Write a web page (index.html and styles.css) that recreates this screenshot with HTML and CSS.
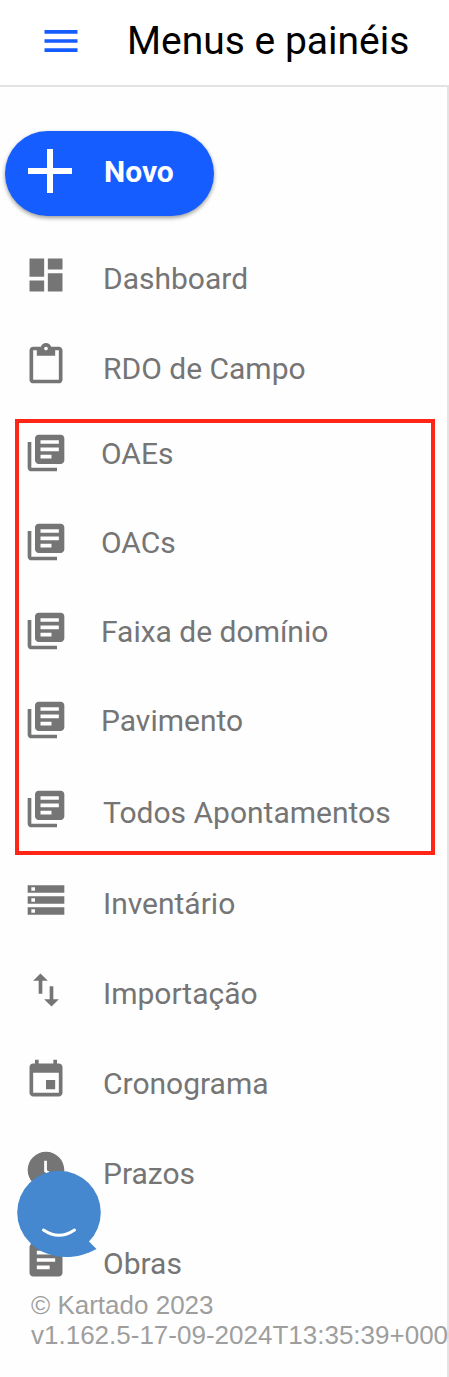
FILE: index.html
```html
<!DOCTYPE html>
<html lang="pt-BR">
<head>
    <meta charset="UTF-8">
    <meta name="viewport" content="width=device-width, initial-scale=1.0">
    <title>Menus e painéis</title>
    <link rel="stylesheet" href="styles.css">
</head>
<body>
    <svg class="sprite" aria-hidden="true">
        <symbol id="books" viewBox="0 0 24 24">
            <path d="M4 6H2v14c0 1.1.9 2 2 2h14v-2H4V6zm16-4H8c-1.1 0-2 .9-2 2v12c0 1.1.9 2 2 2h12c1.1 0 2-.9 2-2V4c0-1.1-.9-2-2-2zm-1 9H9V9h10v2zm-4 4H9v-2h6v2zm4-8H9V5h10v2z"/>
        </symbol>
    </svg>

    <header class="topbar">
        <button class="menu-btn" type="button" aria-label="Menu">
            <svg class="icon" viewBox="0 0 24 24"><path d="M3 18h18v-2H3v2zm0-5h18v-2H3v2zm0-7v2h18V6H3z"/></svg>
        </button>
        <h1>Menus e painéis</h1>
    </header>

    <div class="sidebar">
        <button class="new-btn" type="button">
            <svg class="icon" viewBox="0 0 44 44"><path d="M19 0h6v19h19v6H25v19h-6V25H0v-6h19z"/></svg>
            Novo
        </button>

        <nav>
            <div class="list">
                <a class="item" href="#">
                    <svg class="icon" viewBox="0 0 24 24"><path d="M3 13h8V3H3v10zm0 8h8v-6H3v6zm10 0h8V11h-8v10zm0-18v6h8V3h-8z"/></svg>
                    <span>Dashboard</span>
                </a>
                <a class="item" href="#">
                    <svg class="icon" viewBox="0 0 24 24"><path d="M19 2h-4.18C14.4.84 13.3 0 12 0c-1.3 0-2.4.84-2.82 2H5c-1.1 0-2 .9-2 2v16c0 1.1.9 2 2 2h14c1.1 0 2-.9 2-2V4c0-1.1-.9-2-2-2zm-7 0c.55 0 1 .45 1 1s-.45 1-1 1-1-.45-1-1 .45-1 1-1zm7 18H5V4h2v3h10V4h2v16z"/></svg>
                    <span>RDO de Campo</span>
                </a>
            </div>

            <!-- inventory groups -->
            <div class="list highlight">
                <a class="item sub" href="#"><svg class="icon"><use href="#books"/></svg><span>OAEs</span></a>
                <a class="item sub" href="#"><svg class="icon"><use href="#books"/></svg><span>OACs</span></a>
                <a class="item sub" href="#"><svg class="icon"><use href="#books"/></svg><span>Faixa de domínio</span></a>
                <a class="item sub" href="#"><svg class="icon"><use href="#books"/></svg><span>Pavimento</span></a>
                <a class="item" href="#"><svg class="icon"><use href="#books"/></svg><span>Todos Apontamentos</span></a>
            </div>

            <div class="list">
                <a class="item" href="#">
                    <svg class="icon" viewBox="0 0 24 24"><path d="M2 20h20v-4H2v4zm2-3h2v2H4v-2zM2 4v4h20V4H2zm4 3H4V5h2v2zm-4 7h20v-4H2v4zm2-3h2v2H4v-2z"/></svg>
                    <span>Inventário</span>
                </a>
                <a class="item" href="#">
                    <svg class="icon" viewBox="0 0 24 24"><path d="M16 17.01V10h-2v7.01h-3L15 21l4-3.99h-3zM9 3L5 6.99h3V14h2V6.99h3L9 3z"/></svg>
                    <span>Importação</span>
                </a>
                <a class="item" href="#">
                    <svg class="icon" viewBox="0 0 24 24"><path d="M17 12h-5v5h5v-5zM16 1v2H8V1H6v2H5c-1.11 0-1.99.9-1.99 2L3 19c0 1.1.89 2 2 2h14c1.1 0 2-.9 2-2V5c0-1.1-.9-2-2-2h-1V1h-2zm3 18H5V8h14v11z"/></svg>
                    <span>Cronograma</span>
                </a>
                <a class="item" href="#">
                    <svg class="icon" viewBox="0 0 24 24"><path d="M12 2C6.5 2 2 6.5 2 12s4.5 10 10 10 10-4.5 10-10S17.5 2 12 2zm4.2 14.2L11 13V7h1.5v5.2l4.5 2.7-.8 1.3z"/></svg>
                    <span>Prazos</span>
                </a>
                <a class="item" href="#">
                    <svg class="icon" viewBox="0 0 24 24"><path d="M19 3H5c-1.1 0-2 .9-2 2v14c0 1.1.9 2 2 2h14c1.1 0 2-.9 2-2V5c0-1.1-.9-2-2-2zm-5 14H7v-2h7v2zm3-4H7v-2h10v2zm0-4H7V7h10v2z"/></svg>
                    <span>Obras</span>
                </a>
            </div>
        </nav>

        <footer>
            <p>© Kartado 2023</p>
            <p>v1.162.5-17-09-2024T13:35:39+0000</p>
        </footer>
    </div>

    <button class="chat" type="button" aria-label="Chat">
        <svg viewBox="0 0 84 88">
            <circle cx="42" cy="42.5" r="41.8" fill="#4588cf"/>
            <path d="M13 73C31 90 58 91 79.5 79L71.5 71Z" fill="#4588cf"/>
            <path d="M26.5 60Q42 70.5 57.5 60" fill="none" stroke="#fff" stroke-width="3" stroke-linecap="round"/>
        </svg>
    </button>
</body>
</html>
```

FILE: styles.css
```css
* {
    box-sizing: border-box;
}
body {
    margin: 0;
    min-height: 100vh;
    display: flex;
    flex-direction: column;
    overflow-x: hidden;
    font-family: Roboto, sans-serif;
    background-color: #fefefe;
}
button {
    border: none;
    padding: 0;
    background: none;
    font-family: inherit;
    cursor: pointer;
}
.sprite {
    display: none;
}
.icon {
    display: block;
    width: 44px;
    height: 44px;
    flex-shrink: 0;
    fill: currentColor;
}

.topbar {
    display: flex;
    align-items: center;
    gap: 44px;
    height: 87px;
    padding: 0 0 4px 39px;
    border-bottom: 2px solid #e3e3e3;
    background-color: #fff;
}
.topbar h1 {
    margin: 0;
    font-size: 39px;
    font-weight: 400;
    color: #000;
    white-space: nowrap;
}
.menu-btn {
    color: #155dff;
}

.sidebar {
    flex: 1;
    padding-top: 44px;
    border-right: 2px solid #e3e3e3;
}
.new-btn {
    display: flex;
    align-items: center;
    gap: 32px;
    height: 85px;
    margin: 0 0 37px 5px;
    padding: 0 40px 5px 23px;
    border-radius: 43px;
    background-color: #155dff;
    color: #fff;
    font-size: 30px;
    font-weight: 700;
    box-shadow: 0 2px 4px rgba(0, 0, 0, 0.4);
}

.list {
    display: flex;
    flex-direction: column;
    gap: 46px;
    padding-left: 24px;
}
.item {
    display: flex;
    align-items: center;
    gap: 35px;
    height: 44px;
    color: #757575;
    font-size: 30px;
    text-decoration: none;
    white-space: nowrap;
}
.item span {
    padding-top: 6px;
}
.sub {
    gap: 33px;
}
.sub span {
    padding-top: 0;
}
.highlight {
    gap: 45px;
    margin: 32px 12px 23px 15px;
    padding: 8px 0 20px 5px;
    border: 4px solid #ff2617;
}

footer {
    margin: 8px 0 0 31px;
    font-family: "Liberation Sans", Arial, sans-serif;
    font-size: 26px;
    line-height: 30px;
    color: #9e9e9e;
    white-space: nowrap;
}
footer p {
    margin: 0;
}

/* floats over the menu */
.chat {
    position: fixed;
    left: 17px;
    bottom: 119px;
    width: 84px;
    height: 88px;
}
.chat svg {
    display: block;
}
```
